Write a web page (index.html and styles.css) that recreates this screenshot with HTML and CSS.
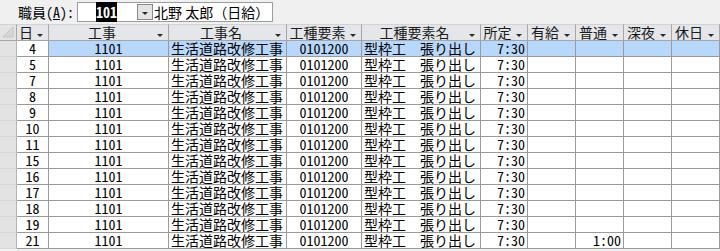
FILE: index.html
```html
<!DOCTYPE html>
<html lang="ja">
<head>
  <meta charset="UTF-8" />
  <title>勤務実績</title>
  <link rel="stylesheet" href="styles.css">
</head>
<body>
  <div class="toolbar">
    <label class="field-label">職員(<u>A</u>):</label>
    <div class="combo">
      <span class="combo-value"><span class="sel">101</span></span>
      <span class="combo-btn"><i class="arrow"></i></span>
      <span class="combo-name">北野 太郎（日給）</span>
    </div>
  </div>

  <div class="sheet">
    <div class="row head">
      <div class="cell selector">
        <svg width="12" height="12" viewBox="0 0 12 12"><polygon points="11,1 11,11 1,11" fill="#d4d6da" stroke="#c2c4c8" /></svg>
      </div>
      <div class="cell"><span class="label">日</span><i class="arrow"></i></div>
      <div class="cell"><span class="label">工事</span><i class="arrow"></i></div>
      <div class="cell"><span class="label">工事名</span><i class="arrow"></i></div>
      <div class="cell"><span class="label">工種要素</span><i class="arrow"></i></div>
      <div class="cell"><span class="label">工種要素名</span><i class="arrow"></i></div>
      <div class="cell"><span class="label">所定</span><i class="arrow"></i></div>
      <div class="cell"><span class="label">有給</span><i class="arrow"></i></div>
      <div class="cell"><span class="label">普通</span><i class="arrow"></i></div>
      <div class="cell"><span class="label">深夜</span><i class="arrow"></i></div>
      <div class="cell"><span class="label">休日</span><i class="arrow"></i></div>
    </div>

    <div class="row current">
      <div class="cell selector"></div>
      <div class="cell c num focus">4</div>
      <div class="cell c num">1101</div>
      <div class="cell l">生活道路改修工事</div>
      <div class="cell c num">0101200</div>
      <div class="cell l">型枠工　張り出し</div>
      <div class="cell r num">7:30</div>
      <div class="cell"></div><div class="cell"></div><div class="cell"></div><div class="cell"></div>
    </div>
    <div class="row">
      <div class="cell selector"></div>
      <div class="cell c num">5</div>
      <div class="cell c num">1101</div>
      <div class="cell l">生活道路改修工事</div>
      <div class="cell c num">0101200</div>
      <div class="cell l">型枠工　張り出し</div>
      <div class="cell r num">7:30</div>
      <div class="cell"></div><div class="cell"></div><div class="cell"></div><div class="cell"></div>
    </div>
    <div class="row">
      <div class="cell selector"></div>
      <div class="cell c num">7</div>
      <div class="cell c num">1101</div>
      <div class="cell l">生活道路改修工事</div>
      <div class="cell c num">0101200</div>
      <div class="cell l">型枠工　張り出し</div>
      <div class="cell r num">7:30</div>
      <div class="cell"></div><div class="cell"></div><div class="cell"></div><div class="cell"></div>
    </div>
    <div class="row">
      <div class="cell selector"></div>
      <div class="cell c num">8</div>
      <div class="cell c num">1101</div>
      <div class="cell l">生活道路改修工事</div>
      <div class="cell c num">0101200</div>
      <div class="cell l">型枠工　張り出し</div>
      <div class="cell r num">7:30</div>
      <div class="cell"></div><div class="cell"></div><div class="cell"></div><div class="cell"></div>
    </div>
    <div class="row">
      <div class="cell selector"></div>
      <div class="cell c num">9</div>
      <div class="cell c num">1101</div>
      <div class="cell l">生活道路改修工事</div>
      <div class="cell c num">0101200</div>
      <div class="cell l">型枠工　張り出し</div>
      <div class="cell r num">7:30</div>
      <div class="cell"></div><div class="cell"></div><div class="cell"></div><div class="cell"></div>
    </div>
    <div class="row">
      <div class="cell selector"></div>
      <div class="cell c num">10</div>
      <div class="cell c num">1101</div>
      <div class="cell l">生活道路改修工事</div>
      <div class="cell c num">0101200</div>
      <div class="cell l">型枠工　張り出し</div>
      <div class="cell r num">7:30</div>
      <div class="cell"></div><div class="cell"></div><div class="cell"></div><div class="cell"></div>
    </div>
    <div class="row">
      <div class="cell selector"></div>
      <div class="cell c num">11</div>
      <div class="cell c num">1101</div>
      <div class="cell l">生活道路改修工事</div>
      <div class="cell c num">0101200</div>
      <div class="cell l">型枠工　張り出し</div>
      <div class="cell r num">7:30</div>
      <div class="cell"></div><div class="cell"></div><div class="cell"></div><div class="cell"></div>
    </div>
    <div class="row">
      <div class="cell selector"></div>
      <div class="cell c num">15</div>
      <div class="cell c num">1101</div>
      <div class="cell l">生活道路改修工事</div>
      <div class="cell c num">0101200</div>
      <div class="cell l">型枠工　張り出し</div>
      <div class="cell r num">7:30</div>
      <div class="cell"></div><div class="cell"></div><div class="cell"></div><div class="cell"></div>
    </div>
    <div class="row">
      <div class="cell selector"></div>
      <div class="cell c num">16</div>
      <div class="cell c num">1101</div>
      <div class="cell l">生活道路改修工事</div>
      <div class="cell c num">0101200</div>
      <div class="cell l">型枠工　張り出し</div>
      <div class="cell r num">7:30</div>
      <div class="cell"></div><div class="cell"></div><div class="cell"></div><div class="cell"></div>
    </div>
    <div class="row">
      <div class="cell selector"></div>
      <div class="cell c num">17</div>
      <div class="cell c num">1101</div>
      <div class="cell l">生活道路改修工事</div>
      <div class="cell c num">0101200</div>
      <div class="cell l">型枠工　張り出し</div>
      <div class="cell r num">7:30</div>
      <div class="cell"></div><div class="cell"></div><div class="cell"></div><div class="cell"></div>
    </div>
    <div class="row">
      <div class="cell selector"></div>
      <div class="cell c num">18</div>
      <div class="cell c num">1101</div>
      <div class="cell l">生活道路改修工事</div>
      <div class="cell c num">0101200</div>
      <div class="cell l">型枠工　張り出し</div>
      <div class="cell r num">7:30</div>
      <div class="cell"></div><div class="cell"></div><div class="cell"></div><div class="cell"></div>
    </div>
    <div class="row">
      <div class="cell selector"></div>
      <div class="cell c num">19</div>
      <div class="cell c num">1101</div>
      <div class="cell l">生活道路改修工事</div>
      <div class="cell c num">0101200</div>
      <div class="cell l">型枠工　張り出し</div>
      <div class="cell r num">7:30</div>
      <div class="cell"></div><div class="cell"></div><div class="cell"></div><div class="cell"></div>
    </div>
    <div class="row">
      <div class="cell selector"></div>
      <div class="cell c num">21</div>
      <div class="cell c num">1101</div>
      <div class="cell l">生活道路改修工事</div>
      <div class="cell c num">0101200</div>
      <div class="cell l">型枠工　張り出し</div>
      <div class="cell r num">7:30</div>
      <div class="cell"></div>
      <div class="cell r num">1:00</div>
      <div class="cell"></div><div class="cell"></div>
    </div>
  </div>
</body>
</html>
```

FILE: styles.css
```css
body {
  margin: 0;
  width: 720px;
  background: #f0f0f0;
  color: #000;
  font-family: "Noto Sans CJK JP", "Noto Sans", sans-serif;
  font-size: 14px;
  line-height: 15px;
  overflow: hidden;
}
/* top filter bar */
.toolbar {
  display: flex;
  align-items: center;
  height: 24px;
  padding-left: 18px;
  box-sizing: border-box;
}
.field-label {
  width: 59px;
  font-feature-settings: "hwid";
}
.combo {
  display: flex;
  align-items: center;
  width: 196px;
  height: 20px;
  box-sizing: border-box;
  border: 1px solid #9c9c9c;
  background: #fff;
  white-space: nowrap;
}
.combo-value {
  width: 59px;
  padding-left: 18px;
  box-sizing: border-box;
}
.sel {
  background: #000;
  color: #fff;
  font-weight: bold;
  font-feature-settings: "hwid";
}
.combo-btn {
  display: flex;
  align-items: flex-end;
  justify-content: center;
  width: 16px;
  height: 16px;
  box-sizing: border-box;
  padding-bottom: 4px;
  border: 1px solid #8a8a8a;
  background: #e4e4e4;
  margin-right: 1px;
}
.arrow {
  display: block;
  width: 0;
  height: 0;
  border-left: 3px solid transparent;
  border-right: 3px solid transparent;
  border-top: 3px solid #2a2a2a;
}
/* datasheet */
.row {
  display: grid;
  grid-template-columns: 17px 32px 120px 118px 75px 119px 47px 48px 48px 48px 48px;
  height: 16px;
  background: #fff;
}
.cell {
  box-sizing: border-box;
  border-right: 1px solid #9a9a9a;
  border-bottom: 1px solid #9a9a9a;
  white-space: nowrap;
}
.num {
  font-feature-settings: "hwid";
}
.c { text-align: center; }
.l { padding-left: 2px; }
.r { text-align: right; padding-right: 2px; }
.selector {
  background: #e3e3e3;
  border-right-color: #b4b4b4;
  border-bottom-color: #d6d6d6;
}
.head {
  height: 17px;
  background: #e4e6ea;
  color: #1a1a1a;
}
.head .cell {
  display: flex;
  align-items: center;
  border-top: 1px solid #d0d2d6;
  border-right-color: #a6a6a6;
  border-bottom-color: #a6a6a6;
}
.head .label {
  flex: 1;
  text-align: center;
}
.head .arrow {
  margin: 5px 5px 0 2px;
}
.head .selector {
  align-items: flex-end;
  justify-content: flex-end;
  padding: 0 2px 2px 0;
}
.current .cell {
  background: #b7d7fb;
}
.current .selector {
  background: #e3e3e3;
}
.current .focus {
  background: #fff;
}
```
